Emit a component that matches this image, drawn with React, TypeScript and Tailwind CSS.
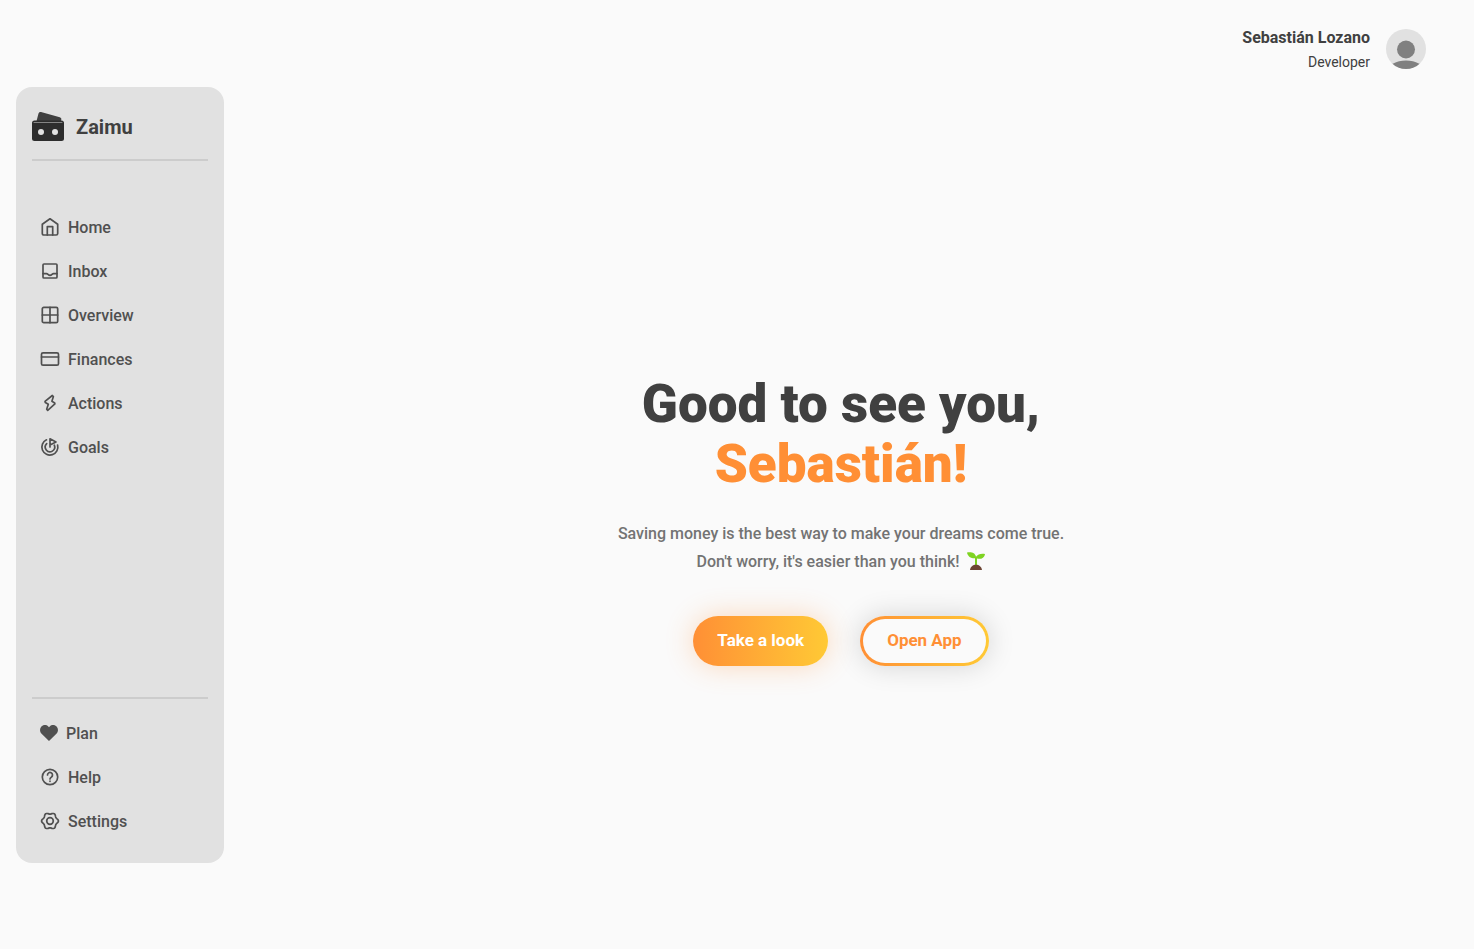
import type { ReactNode } from "react";

function Icon({ children }: { children: ReactNode }) {
  return (
    <svg aria-hidden="true" viewBox="0 0 20 20" className="size-5 shrink-0" fill="none" stroke="currentColor" strokeWidth="1.700" strokeLinecap="round" strokeLinejoin="round">
      {children}
    </svg>
  );
}

// Outline of a gear with six rounded teeth, centred in the 20-unit icon box.
const gearPoints = Array.from({ length: 72 }, (_, i) => {
  const angle = (i * Math.PI) / 36;
  const radius = 7.6 + 0.8 * Math.cos(6 * angle);
  return `${(10 + radius * Math.cos(angle)).toFixed(2)},${(10 + radius * Math.sin(angle)).toFixed(2)}`;
}).join(" ");

const mainLinks = [
  {
    label: "Home",
    icon: (
      <Icon>
        <path d="M2.300 7.200 10 1.800l7.700 5.400v9.300a1.500 1.500 0 0 1-1.500 1.500H3.800a1.500 1.500 0 0 1-1.500-1.500z" />
        <path d="M7.300 18v-8.400h5.400V18" />
      </Icon>
    ),
  },
  {
    label: "Inbox",
    icon: (
      <Icon>
        <rect x="3" y="3" width="14" height="14" rx="1" />
        <path d="M3 12.600h3.500c1.300 0 1.800 1.800 3.500 1.800s2.200-1.800 3.500-1.800H17" />
      </Icon>
    ),
  },
  {
    label: "Overview",
    icon: (
      <Icon>
        <rect x="2.300" y="2.300" width="15.400" height="15.400" rx="1.500" />
        <path d="M10 2.300v15.400M2.300 10h15.400" />
      </Icon>
    ),
  },
  {
    label: "Finances",
    icon: (
      <Icon>
        <rect x="1.500" y="3.800" width="17" height="12.400" rx="1.500" />
        <path d="M1.500 8h17" />
      </Icon>
    ),
  },
  {
    label: "Actions",
    icon: (
      <Icon>
        <path d="M12.300 2.500 5 8.300 5.300 9.500 8.300 11.300 6.700 16.300 7.700 17.400 14.900 10.900 14.700 9.900 11.900 8.300 13.400 3.600z" />
      </Icon>
    ),
  },
  {
    label: "Goals",
    icon: (
      <Icon>
        <path d="M10 10V1.800l6 3.100-6 3.100" />
        <path d="M6.500 2.800A8 8 0 1 0 17.600 8" />
        <path d="M6.700 6.700a4.700 4.700 0 1 0 7.600 1.500" />
      </Icon>
    ),
  },
];

const footerLinks = [
  {
    label: "Plan",
    icon: (
      <svg aria-hidden="true" viewBox="0 0 18 18" className="size-[18px] shrink-0" fill="currentColor">
        <path d="M9 17 1.600 9.700C-.3 7.800-.5 4.700 1.200 2.800 3.100.6 6.300.5 8.300 2.500l.7.7.7-.7c2-2 5.200-1.900 7.100.3 1.700 1.900 1.500 5-.4 6.900z" />
      </svg>
    ),
  },
  {
    label: "Help",
    icon: (
      <Icon>
        <circle cx="10" cy="10" r="7.700" />
        <path d="M7.500 8a2.500 2.500 0 1 1 4 2C10.500 10.700 10 11 10 12M10 14.200v.1" />
      </Icon>
    ),
  },
  {
    label: "Settings",
    icon: (
      <Icon>
        <circle cx="10" cy="10" r="3.300" />
        <polygon points={gearPoints} />
      </Icon>
    ),
  },
];

function NavItem({ label, icon }: { label: string; icon: ReactNode }) {
  return (
    <li>
      <a href="#" className="flex h-11 items-center gap-2 px-2 font-medium">
        {icon}
        <span className="pt-0.5">{label}</span>
      </a>
    </li>
  );
}

function Logo() {
  return (
    <svg aria-hidden="true" viewBox="0 0 32 32" className="size-8">
      <path fill="#404040" d="M4 12 6.500 2.500C6.900 1.200 7.800.7 9 1l18.800 5.300c1.200.4 1.800 1.200 1.500 2.400L28.500 12z" />
      <rect y="9.500" width="32" height="20.500" rx="2.500" fill="#2d2d2d" />
      <path d="M2 11.500h28" stroke="#858585" strokeWidth="1" strokeLinecap="round" />
      <circle cx="9" cy="21" r="3" fill="#e1e1e1" />
      <circle cx="23" cy="21" r="3" fill="#e1e1e1" />
    </svg>
  );
}

function Seedling() {
  return (
    <svg role="img" aria-label="seedling" viewBox="0 0 18 18" className="ml-1 inline-block size-[18px] align-[-3px]">
      <path fill="#7ed321" d="M0 .5c4-.7 8-.2 9 4.300C10.800 2 14 1.300 18 1.900c-.7 4.500-4.500 5.600-8 4.600V14H8V6.300C4 6.500.8 4.700 0 .5z" />
      <path fill="#6d4534" d="M3 18c.3-3.300 2.900-5.300 6-5.300s5.600 2 6 5.300z" />
    </svg>
  );
}

export default function App() {
  return (
    <div className="flex min-h-screen flex-col bg-[#fafafa] font-[Roboto,sans-serif] text-[#404040]">
      <header className="flex items-center justify-end gap-4 px-12 pt-6">
        <div className="pt-0.5 text-right">
          <p className="text-base font-bold leading-6">Sebastián Lozano</p>
          <p className="text-sm leading-6">Developer</p>
        </div>
        <svg role="img" aria-label="Profile picture" viewBox="0 0 40 40" className="size-10 rounded-full bg-[#e1e1e1]">
          <circle cx="20" cy="20.500" r="9" fill="#808080" />
          <ellipse cx="20" cy="42" rx="18" ry="10.500" fill="#808080" />
        </svg>
      </header>

      <div className="flex grow">
        <aside className="mb-[86px] ml-4 mt-[13px] flex w-52 shrink-0 flex-col rounded-2xl bg-[#e1e1e1] px-4 pb-5 text-[#505050]">
          <div className="flex h-[74px] items-center gap-3 border-b-2 border-[#cccccc] pt-2 text-[#404040]">
            <Logo />
            <span className="text-xl font-bold">Zaimu</span>
          </div>
          <nav aria-label="Main" className="grow pt-11">
            <ul>
              {mainLinks.map((link) => <NavItem key={link.label} {...link} />)}
            </ul>
          </nav>
          <nav aria-label="Account" className="border-t-2 border-[#cccccc] pt-3">
            <ul>
              {footerLinks.map((link) => <NavItem key={link.label} {...link} />)}
            </ul>
          </nav>
        </aside>

        <main className="flex grow flex-col items-center justify-center pr-4 pt-4 text-center">
          <h1 className="text-[53px] font-black leading-[60px]">
            Good to see you,
            <br />
            <span className="text-[#ff8f35]">Sebastián!</span>
          </h1>
          <p className="mt-[26px] font-medium leading-7 text-[#737373]">
            Saving money is the best way to make your dreams come true.
            <br />
            Don't worry, it's easier than you think! <Seedling />
          </p>
          <div className="mt-10 flex gap-8 text-[17px] font-bold">
            <button className="h-[50px] rounded-full bg-linear-to-r from-[#ff8f35] to-[#ffc935] px-6 text-white shadow-[0_0_28px_#ff8f3550]">
              Take a look
            </button>
            <button className="h-[50px] rounded-full bg-linear-to-r from-[#ff8f35] to-[#ffc935] p-[3px] text-[#ff8f35] shadow-[0_0_28px_#00000028]">
              <span className="flex h-full items-center rounded-full bg-[#fafafa] px-6">Open App</span>
            </button>
          </div>
        </main>
      </div>
    </div>
  );
}
